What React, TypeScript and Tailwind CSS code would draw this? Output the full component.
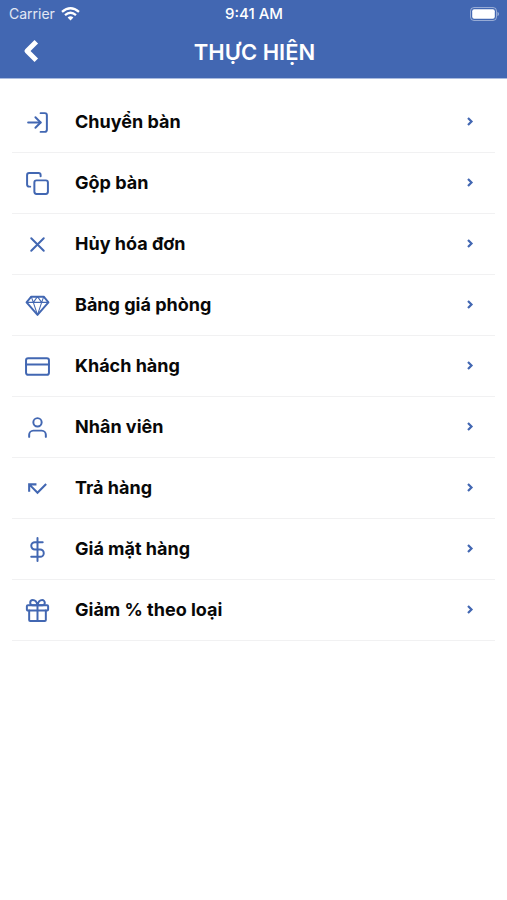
import type { ReactNode } from "react";

type Item = { label: string; icon: ReactNode };

const items: Item[] = [
  {
    label: "Chuyển bàn",
    icon: (
      <>
        <path d="M15 3h4a2 2 0 0 1 2 2v14a2 2 0 0 1-2 2h-4" />
        <path d="m10 17 5-5-5-5" />
        <path d="M15 12H3" />
      </>
    ),
  },
  {
    label: "Gộp bàn",
    icon: (
      <>
        <rect x="9" y="9" width="13" height="13" rx="2" />
        <path d="M5 15H4a2 2 0 0 1-2-2V4a2 2 0 0 1 2-2h9a2 2 0 0 1 2 2v1" />
      </>
    ),
  },
  { label: "Hủy hóa đơn", icon: <path d="M18 6 6 18M6 6l12 12" /> },
  {
    label: "Bảng giá phòng",
    icon: (
      <>
        <path d="M6 3.5h12L22.5 9 12 21 1.5 9z" />
        <g strokeWidth="1">
          <path d="M1.5 9h21M8 9l4 12 4-12M6 3.5 8 9l4-5.500L16 9l2-5.500" />
        </g>
      </>
    ),
  },
  {
    label: "Khách hàng",
    icon: (
      <>
        <rect x="1" y="4" width="22" height="16" rx="2" />
        <path d="M1 10h22" />
      </>
    ),
  },
  {
    label: "Nhân viên",
    icon: (
      <>
        <path d="M20 21v-2a4 4 0 0 0-4-4H8a4 4 0 0 0-4 4v2" />
        <circle cx="12" cy="7" r="4" />
      </>
    ),
  },
  {
    label: "Trả hàng",
    icon: (
      <path
        d="M19.590 7 12 14.590 6.410 9H11V7H3v8h2v-4.590l7 7 9-9z"
        fill="currentColor"
        stroke="none"
      />
    ),
  },
  {
    label: "Giá mặt hàng",
    icon: <path d="M12 1v22M17 5H9.500a3.500 3.500 0 0 0 0 7h5a3.500 3.500 0 0 1 0 7H6" />,
  },
  {
    label: "Giảm % theo loại",
    icon: (
      <>
        <path d="M20 12v9a1 1 0 0 1-1 1H5a1 1 0 0 1-1-1v-9" />
        <rect x="1.800" y="7" width="20.400" height="5" rx="1" />
        <path d="M12 22V7H7.500a2.500 2.500 0 0 1 0-5C11 2 12 7 12 7s1-5 4.500-5a2.500 2.500 0 0 1 0 5H12" />
      </>
    ),
  },
];

function StatusBar() {
  return (
    <div className="grid h-7 grid-cols-3 items-center pr-2 pl-[9px] text-sm leading-5">
      <div className="flex items-center gap-[6px] text-white/85">
        <span>Carrier</span>
        <svg width="19" height="14" viewBox="0 0 19 14" fill="none" stroke="white" strokeWidth="2.3" aria-hidden="true">
          <path d="M1 4.800Q9.500-2.300 18 4.800" />
          <path d="M4 8.100Q9.500 3.500 15 8.100" />
          <path d="M6.600 10.500Q9.500 8.100 12.400 10.500L9.500 13.500z" fill="white" stroke="none" />
        </svg>
      </div>
      <span className="text-center text-[15px] font-medium">9:41 AM</span>
      <svg className="justify-self-end" width="29" height="14" viewBox="0 0 29 14" aria-hidden="true">
        <rect x="0.500" y="0.500" width="26" height="13" rx="3.500" fill="none" stroke="white" strokeOpacity="0.45" />
        <rect x="2.200" y="2.200" width="22.600" height="9.600" rx="2" fill="white" />
        <path d="M27.500 4.800q1.500 .700 1.500 2.200t-1.500 2.200z" fill="white" fillOpacity="0.5" />
      </svg>
    </div>
  );
}

export default function App() {
  return (
    <div className="min-h-screen bg-white font-['Inter','Liberation_Sans',sans-serif]">
      <header className="border-b border-[#a9bbdf] bg-[#4267b2] text-white">
        <StatusBar />
        <div className="grid h-[50px] grid-cols-[64px_1fr_62px] items-center pb-[2px]">
          <button type="button" aria-label="Back" className="flex h-11 items-center pb-[2px] pl-[23px]">
            <svg width="16" height="24" viewBox="0 0 16 24" fill="none" stroke="currentColor" strokeWidth="5" strokeLinejoin="round" aria-hidden="true">
              <path d="M13.300 2.700 4 12l9.300 9.300" />
            </svg>
          </button>
          <h1 className="text-center text-[22px] leading-7 font-semibold">THỰC HIỆN</h1>
        </div>
      </header>
      <main className="px-3 pt-[13px]">
        <ul>
          {items.map(({ label, icon }) => (
            <li key={label} className="border-b border-[#f1f1f2]">
              <button type="button" className="flex h-15 w-full items-center pr-[21px] pl-[13px] text-left">
                <svg
                  className="shrink-0 text-[#4267b2]"
                  width="25"
                  height="25"
                  viewBox="0 0 24 24"
                  fill="none"
                  stroke="currentColor"
                  strokeWidth="1.900"
                  strokeLinecap="round"
                  strokeLinejoin="round"
                  aria-hidden="true"
                >
                  {icon}
                </svg>
                <span className="ml-[25px] flex-1 text-lg font-bold text-[#080808]">{label}</span>
                <svg width="8" height="10" viewBox="0 0 8 10" fill="none" stroke="#4267b2" strokeWidth="2.200" aria-hidden="true">
                  <path d="M2 1 5.500 4.500 2 8" />
                </svg>
              </button>
            </li>
          ))}
        </ul>
      </main>
    </div>
  );
}
